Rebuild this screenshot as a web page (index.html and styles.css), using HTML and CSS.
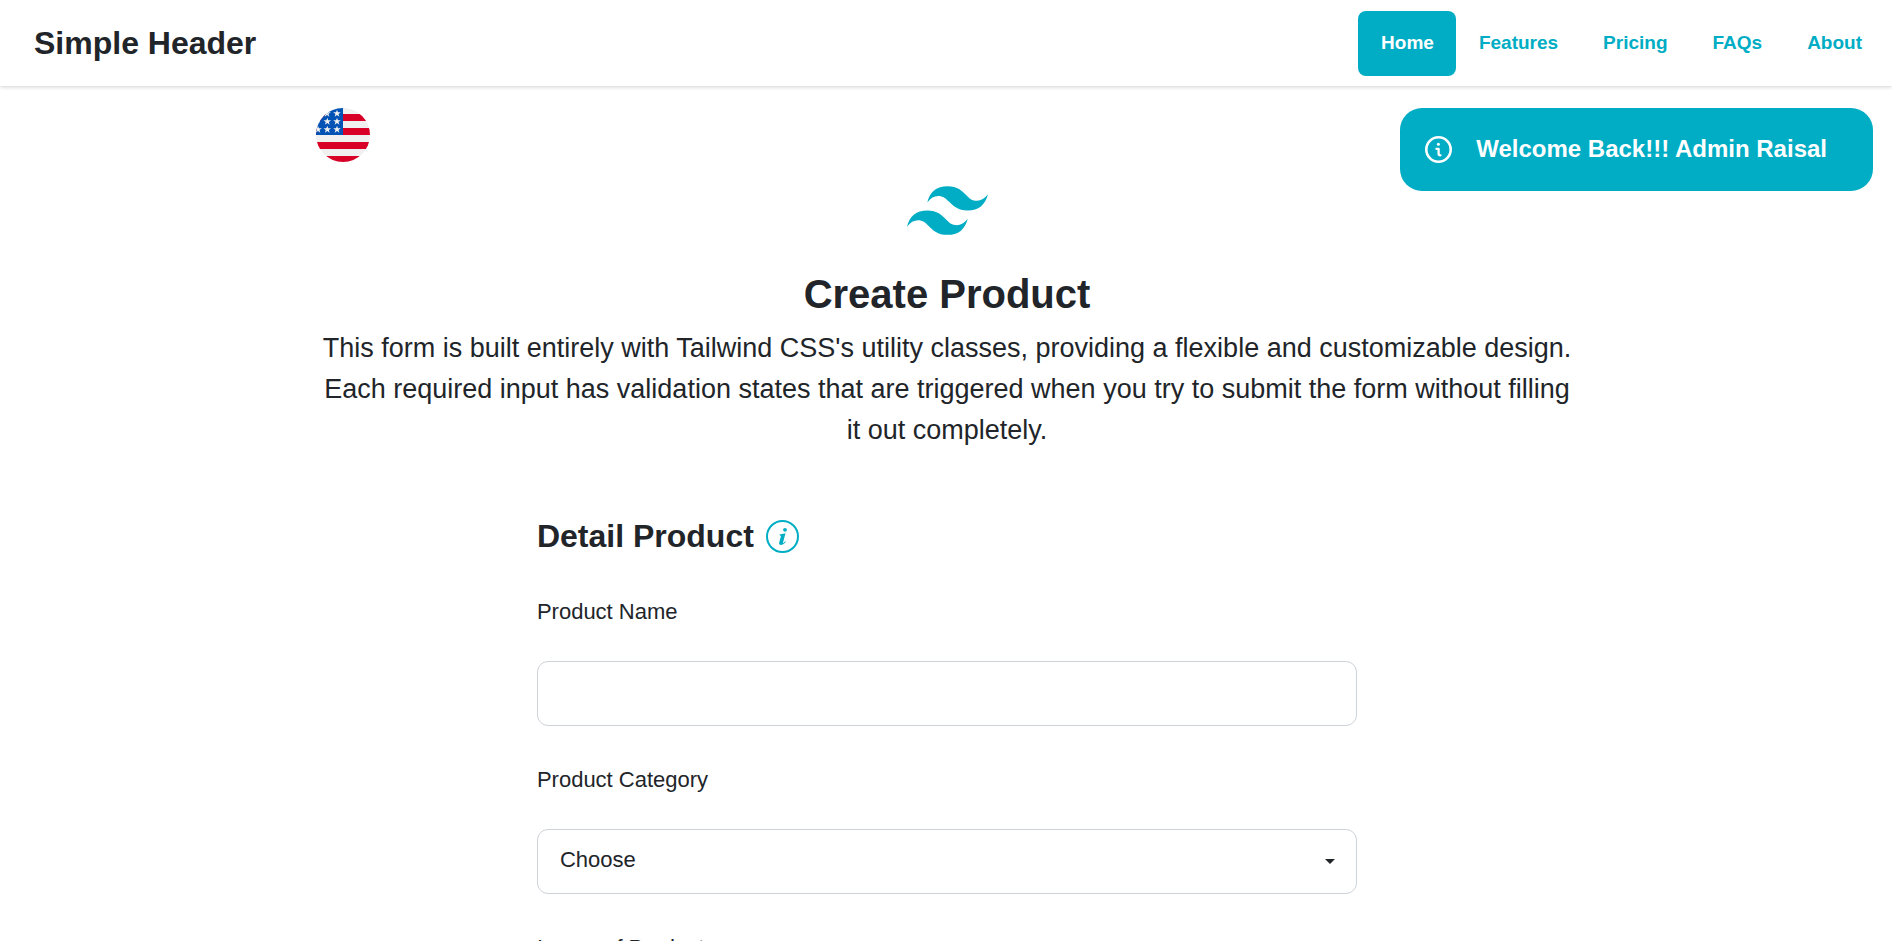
FILE: index.html
```html
<!DOCTYPE html>
<html lang="en">
<head>
  <meta charset="utf-8">
  <meta name="viewport" content="width=device-width, initial-scale=1">
  <title>Create Product</title>
  <link rel="stylesheet" href="styles.css">
</head>
<body>
  <header class="site-header">
    <a class="brand" href="#">Simple Header</a>
    <nav class="nav" aria-label="Main">
      <a class="nav-link nav-link-active" href="#" aria-current="page">Home</a>
      <a class="nav-link" href="#features">Features</a>
      <a class="nav-link" href="#pricing">Pricing</a>
      <a class="nav-link" href="#faqs">FAQs</a>
      <a class="nav-link" href="#about">About</a>
    </nav>
  </header>

  <div class="notice" role="status">
    <svg class="notice-icon" viewBox="0 0 27 27" fill="none" stroke="currentColor" aria-hidden="true">
      <circle cx="13.500" cy="13.500" r="12.200" stroke-width="2.600"/>
      <path d="M11.400 12.800h2.200v5c0 1 .6 1.500 1.900 1.500" stroke-width="2.300" stroke-linecap="round" stroke-linejoin="round"/>
      <circle cx="13.400" cy="8.200" r="1.500" fill="currentColor" stroke="none"/>
    </svg>
    <span>Welcome Back!!! Admin Raisal</span>
  </div>

  <main class="page">
    <button class="language" type="button" aria-label="Change language">
      <svg class="flag" viewBox="0 0 54 54" aria-hidden="true">
        <defs>
          <clipPath id="round"><circle cx="27" cy="27" r="27"/></clipPath>
          <path id="star" d="M0-3.800.95-1.200 3.800-1.200 1.550.5 2.350 3.200 0 1.600-2.350 3.200-1.550.5-3.800-1.200-.95-1.200z"/>
        </defs>
        <g clip-path="url(#round)">
          <path fill="#f0f0f0" d="M0 0h54v54H0z"/>
          <path fill="#d80027" d="M0 6h54v7H0zM0 20h54v7H0zM0 34h54v7H0zM0 48h54v6H0z"/>
          <path fill="#0052b4" d="M0 0h27v27H0z"/>
          <g fill="#f0f0f0">
            <use href="#star" x="11" y="5.500"/><use href="#star" x="21" y="5.500"/>
            <use href="#star" x="11.300" y="13.500"/><use href="#star" x="21" y="13.500"/>
            <use href="#star" x="2" y="21.500"/><use href="#star" x="11.300" y="21.500"/><use href="#star" x="21" y="21.500"/>
          </g>
        </g>
      </svg>
    </button>

    <section class="intro">
      <svg class="logo" viewBox="0 0 54 33" aria-hidden="true">
        <path fill="currentColor" fill-rule="evenodd" d="M27 0c-7.2 0-11.7 3.6-13.5 10.8 2.7-3.6 5.85-4.95 9.45-4.05 2.054.513 3.522 2.004 5.147 3.653C30.744 13.09 33.808 16.2 40.5 16.2c7.2 0 11.7-3.6 13.5-10.8-2.7 3.6-5.85 4.95-9.45 4.05-2.054-.513-3.522-2.004-5.147-3.653C36.756 3.11 33.692 0 27 0zM13.5 16.2C6.3 16.2 1.8 19.8 0 27c2.7-3.6 5.85-4.95 9.45-4.05 2.054.514 3.522 2.004 5.147 3.653C17.244 29.29 20.308 32.4 27 32.4c7.2 0 11.7-3.6 13.5-10.8-2.7 3.6-5.85 4.95-9.45 4.05-2.054-.513-3.522-2.004-5.147-3.653C23.256 19.31 20.192 16.2 13.5 16.2z"/>
      </svg>
      <h1 class="title">Create Product</h1>
      <p class="lead">This form is built entirely with Tailwind CSS's utility classes, providing a flexible and customizable design. Each required input has validation states that are triggered when you try to submit the form without filling it out completely.</p>
    </section>

    <form class="form">
      <h2 class="form-title">
        <span>Detail Product</span>
        <svg class="info-icon" viewBox="0 0 33 33" fill="currentColor" aria-hidden="true">
          <circle cx="16.500" cy="16.500" r="15.500" fill="none" stroke="currentColor" stroke-width="2"/>
          <circle cx="19" cy="9.800" r="1.900"/>
          <path d="M13.600 14.400L19.500 13.300L17.100 22.200Q16.800 23.600 17.600 22.900L19.200 21.200L19.900 21.700Q17.300 25.300 14.900 25.100Q12.700 24.900 13.200 22.500L14.800 16.800Q15.300 15.200 13.500 15.300Z"/>
        </svg>
      </h2>
      <div class="field">
        <label for="name">Product Name</label>
        <input class="control" id="name" name="name" type="text">
      </div>
      <div class="field">
        <label for="category">Product Category</label>
        <div class="select-wrap">
          <select class="control" id="category" name="category">
            <option>Choose</option>
          </select>
          <svg class="caret" viewBox="0 0 10 5" aria-hidden="true"><path fill="currentColor" d="M0 0h10L5 5z"/></svg>
        </div>
      </div>
      <div class="field">
        <label for="image">Image of Product</label>
        <input class="control" id="image" name="image" type="file">
      </div>
    </form>
  </main>
</body>
</html>
```
FILE: styles.css
```css
:root {
  --accent: #00adc4;
  --ink: #212529;
  --line: #ced2d9;
}

*, *::before, *::after { box-sizing: border-box; }

html { scrollbar-width: none; }

body {
  margin: 0;
  background: #fff;
  color: var(--ink);
  font: 22px/32px "Liberation Sans", Arial, sans-serif;
}

h1, h2, p { margin: 0; }

.site-header {
  display: flex;
  align-items: flex-start;
  justify-content: space-between;
  padding: 11px 8px 10px 34px;
  box-shadow: 0 1px 4px rgba(0, 0, 0, 0.18);
}

.brand {
  padding-top: 16px;
  color: inherit;
  font-size: 32px;
  font-weight: 700;
  text-decoration: none;
}

.nav { display: flex; }

.nav-link {
  padding: 16px 22px 17px 23px;
  border-radius: 8px;
  color: var(--accent);
  font-size: 19px;
  font-weight: 700;
  text-decoration: none;
}

.nav-link-active { background: var(--accent); color: #fff; }

.notice {
  position: absolute;
  top: 108px;
  right: 19px;
  display: flex;
  align-items: center;
  gap: 24px;
  padding: 25px 46px 26px 25px;
  border-radius: 22px;
  background: var(--accent);
  color: #fff;
  font-size: 24px;
  font-weight: 700;
}

.notice-icon { width: 27px; height: 27px; }

.page {
  width: 66.8%;
  margin: 0 auto;
  padding: 22px 0 48px 2px;
}

.language {
  display: block;
  padding: 0;
  border: 0;
  border-radius: 50%;
  background: none;
  cursor: pointer;
}

.flag { display: block; width: 54px; height: 54px; }

.intro {
  display: flex;
  flex-direction: column;
  align-items: center;
  padding-top: 24px;
  text-align: center;
}

.logo { width: 81px; height: 50px; color: var(--accent); }

.title { margin-top: 34px; font-size: 40px; line-height: 48px; }

.lead { margin-top: 10px; font-size: 27px; line-height: 41px; }

.form {
  width: 65%;
  margin: 0 auto;
  padding-top: 65px;
}

.form-title {
  display: flex;
  align-items: center;
  gap: 12px;
  padding-bottom: 2px;
  font-size: 32px;
  line-height: 40px;
}

.info-icon { width: 33px; height: 33px; color: var(--accent); }

.field {
  display: flex;
  flex-direction: column;
  gap: 33px;
  padding-top: 38px;
}

.control {
  width: 100%;
  height: 65px;
  padding: 0 22px 3px;
  border: 1px solid var(--line);
  border-radius: 11px;
  background: #fff;
  color: inherit;
  font: inherit;
  appearance: none;
}

.select-wrap { display: grid; align-items: center; }

.select-wrap > * { grid-area: 1 / 1; }

.caret {
  justify-self: end;
  width: 10px;
  height: 5px;
  margin-right: 22px;
  pointer-events: none;
}
```
